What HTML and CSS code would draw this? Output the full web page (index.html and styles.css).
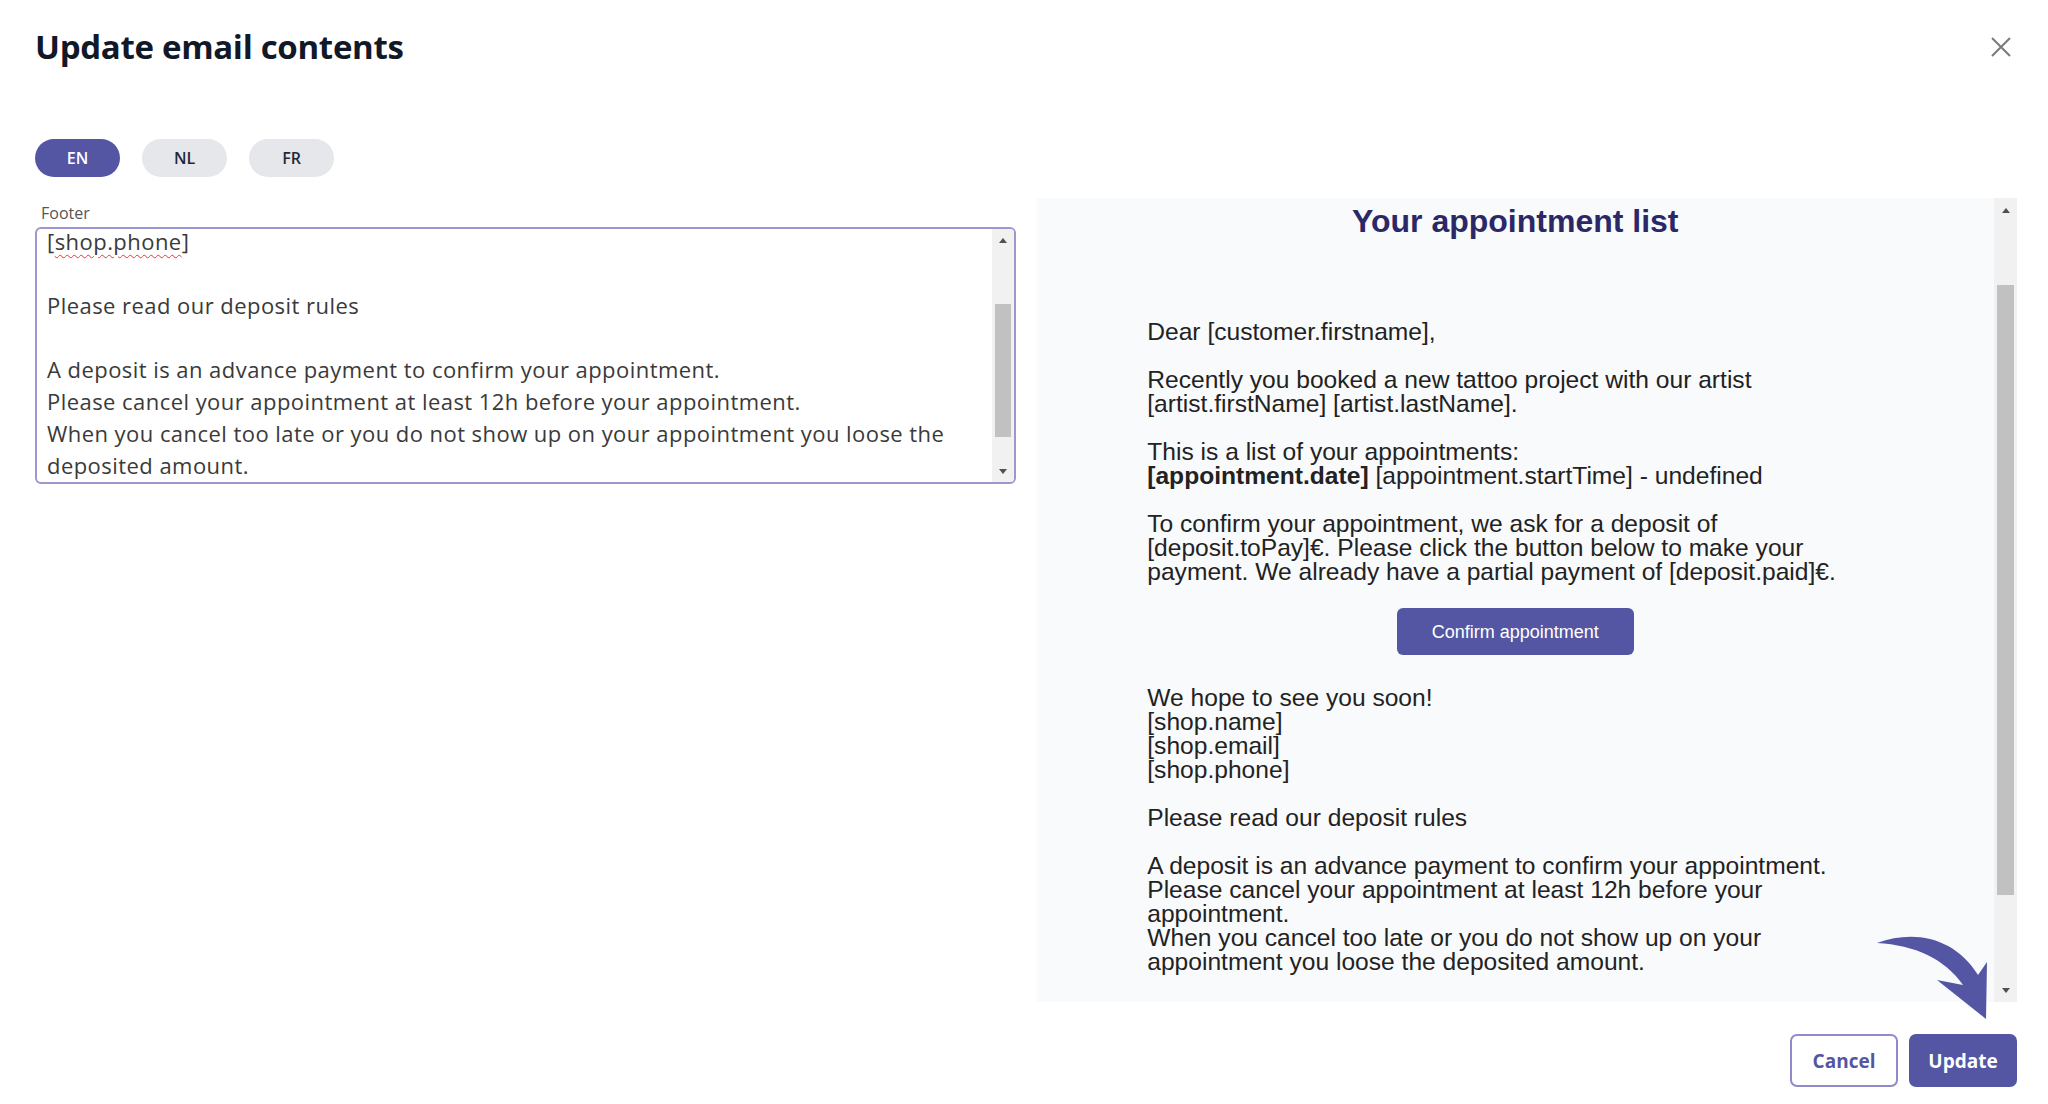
FILE: index.html
```html
<!DOCTYPE html>
<html lang="en">
<head>
	<meta charset="utf-8" />
	<title>Update email contents</title>
	<link rel="stylesheet" href="styles.css">
</head>
<body>
<div class="modal">
	<header class="modal-head">
		<h1>Update email contents</h1>
		<button class="close" type="button" aria-label="Close">
			<svg viewBox="0 0 20 20" width="20" height="20"><path d="M1 1L19 19M19 1L1 19" stroke="#7a7a7a" stroke-width="2" fill="none"/></svg>
		</button>
	</header>

	<nav class="langs">
		<button class="lang active" type="button">EN</button>
		<button class="lang" type="button">NL</button>
		<button class="lang" type="button">FR</button>
	</nav>

	<section class="editor">
		<div class="field">
			<label class="field-label">Footer</label>
			<div class="textarea">
<div class="ta-text">[<span class="typo">shop.phone</span>]

Please read our deposit rules

A deposit is an advance payment to confirm your appointment.
Please cancel your appointment at least 12h before your appointment.
When you cancel too late or you do not show up on your appointment you loose the deposited amount.</div>
				<div class="scrollbar">
					<div class="sb-arrow up"></div>
					<div class="sb-track"><div class="sb-thumb" style="margin-top:53px;height:133px"></div></div>
					<div class="sb-arrow down"></div>
				</div>
			</div>
		</div>

		<div class="preview">
			<div class="preview-body">
				<div class="email">
					<h2>Your appointment list</h2>
					<p>Dear [customer.firstname],</p>
					<p>Recently you booked a new tattoo project with our artist [artist.firstName] [artist.lastName].</p>
					<p>This is a list of your appointments:<br><b>[appointment.date]</b> [appointment.startTime] - undefined</p>
					<p>To confirm your appointment, we ask for a deposit of [deposit.toPay]&euro;. Please click the button below to make your payment. We already have a partial payment of [deposit.paid]&euro;.</p>
					<a class="email-btn">Confirm appointment</a>
					<p>We hope to see you soon!<br>[shop.name]<br>[shop.email]<br>[shop.phone]</p>
					<p>Please read our deposit rules</p>
					<p>A deposit is an advance payment to confirm your appointment.<br>Please cancel your appointment at least 12h before your appointment.<br>When you cancel too late or you do not show up on your appointment you loose the deposited amount.</p>
				</div>
			</div>
			<div class="scrollbar wide">
				<div class="sb-arrow up"></div>
				<div class="sb-track"><div class="sb-thumb" style="margin-top:63px;height:610px"></div></div>
				<div class="sb-arrow down"></div>
			</div>
		</div>
	</section>

	<footer class="actions">
		<svg class="hint-arrow" viewBox="0 0 125 95" width="125" height="95">
			<path d="M7 13 C45 -1 85 8 108 45 L117 32 L116 89 L67 50 L93 55 C75 29 45 15 7 13 Z" fill="#5456a4"/>
		</svg>
		<button class="btn btn-outline" type="button">Cancel</button>
		<button class="btn btn-primary" type="button">Update</button>
	</footer>
</div>
</body>
</html>
```

FILE: styles.css
```css
body {
	margin: 0;
	padding: 0;
	background: #fff;
	font-family: "Open Sans", sans-serif;
	color: #111827;
}
button {
	font-family: inherit;
	border: 0;
	background: none;
	padding: 0;
	cursor: pointer;
}
.modal {
	padding: 27px 31px 0 35px;
}

/* header */
.modal-head {
	display: flex;
	align-items: center;
	justify-content: space-between;
	height: 40px;
}
.modal-head h1 {
	margin: 0;
	font-size: 33px;
	line-height: 40px;
	font-weight: 700;
	color: #111827;
	letter-spacing: -0.3px;
}
.close {
	width: 32px;
	height: 32px;
	display: flex;
	align-items: center;
	justify-content: center;
}

/* language pills */
.langs {
	display: flex;
	gap: 22px;
	margin-top: 72px;
}
.lang {
	width: 85px;
	height: 38px;
	border-radius: 19px;
	background: #e5e7eb;
	color: #1f2937;
	font-size: 16px;
	font-weight: 600;
}
.lang.active {
	background: #5456a4;
	color: #fff;
}

/* editor + preview */
.editor {
	display: grid;
	grid-template-columns: 1fr 1fr;
	gap: 21px;
	margin-top: 21px;
	height: 804px;
}
.field-label {
	display: block;
	padding: 5px 0 0 6px;
	margin-bottom: 4px;
	font-size: 16px;
	line-height: 20px;
	color: #555;
}
.textarea {
	display: flex;
	height: 257px;
	box-sizing: border-box;
	border: 2px solid #9b98cf;
	border-radius: 6px;
	background: #fff;
	overflow: hidden;
}
.ta-text {
	flex: 1;
	padding: 0 10px;
	margin-top: -4px;
	white-space: pre-line;
	font-size: 22px;
	line-height: 32px;
	letter-spacing: 0.45px;
	color: #3a3a3a;
}
.typo {
	text-decoration: underline wavy #e53935;
	text-decoration-thickness: 1px;
	text-underline-offset: 4px;
}

/* fake scrollbars */
.scrollbar {
	display: flex;
	flex-direction: column;
	width: 22px;
	background: #f1f1f1;
}
.scrollbar.wide {
	width: 23px;
}
.sb-arrow {
	height: 22px;
	display: flex;
	align-items: center;
	justify-content: center;
}
.wide .sb-arrow {
	height: 24px;
}
.sb-arrow::before {
	content: "";
	border-left: 4px solid transparent;
	border-right: 4px solid transparent;
}
.sb-arrow.up::before {
	border-bottom: 5px solid #505050;
}
.sb-arrow.down::before {
	border-top: 5px solid #505050;
}
.sb-track {
	flex: 1;
	padding: 0 3px;
}
.sb-thumb {
	background: #c1c1c1;
}

.preview {
	display: flex;
	background: #f9fafc;
	overflow: hidden;
}
.preview-body {
	flex: 1;
	padding-top: 4px;
	overflow: hidden;
}
.email {
	width: 736px;
	margin: 0 auto;
	font-family: "Liberation Sans", sans-serif;
	font-size: 24.6px;
	line-height: 24px;
	color: #222;
}
.email h2 {
	margin: 0 0 80px;
	text-align: center;
	font-size: 32px;
	line-height: 38px;
	font-weight: 700;
	color: #2b2868;
}
.email p {
	margin: 0 0 24px;
}
.email-btn {
	display: flex;
	align-items: center;
	justify-content: center;
	width: 237px;
	height: 47px;
	margin: 6px auto 31px;
	border-radius: 6px;
	background: #5456a4;
	color: #fff;
	font-size: 18px;
}

/* footer buttons */
.actions {
	position: relative;
	display: flex;
	justify-content: flex-end;
	gap: 11px;
	margin-top: 32px;
}
.hint-arrow {
	position: absolute;
	right: 22px;
	top: -104px;
}
.btn {
	width: 108px;
	height: 53px;
	box-sizing: border-box;
	border-radius: 7px;
	font-size: 19px;
	font-weight: 700;
}
.btn-outline {
	border: 2px solid #8f8bca;
	background: #fff;
	color: #5456a4;
}
.btn-primary {
	background: #5456a4;
	color: #fff;
}
```
